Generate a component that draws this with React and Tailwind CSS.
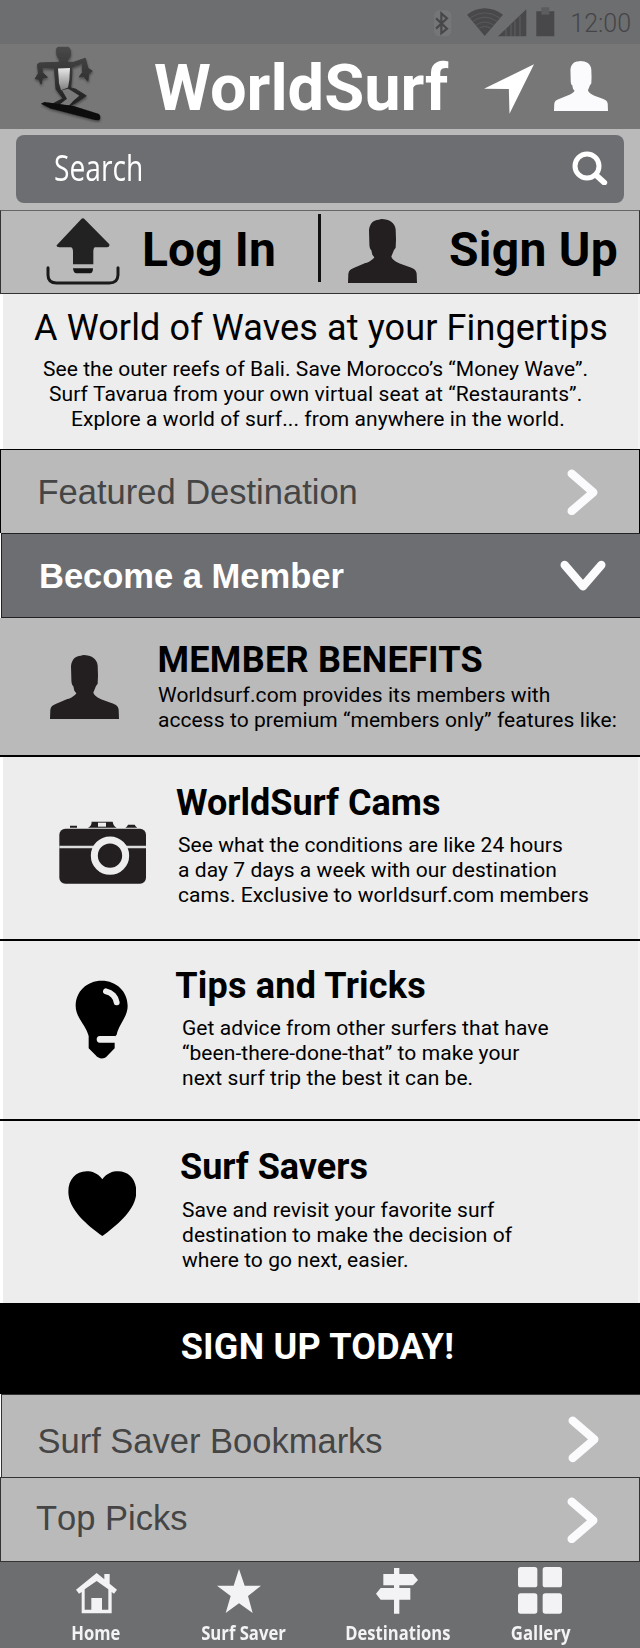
import React from "react";

const roboto = "font-['Roboto',sans-serif]";
const liberation = "font-['Liberation_Sans',sans-serif]";

function Person({ className }) {
  return (
    <svg viewBox="0 0 207 193" preserveAspectRatio="none" fill="currentColor" className={className}>
      <path d="M100 0C124 1 141 10 143 32L144 62L143 87C140 91 137 94 135 101L130 113C132 121 142 129 155 134L184 145C198 150 204 154 206 165L207 193H0L1 165C3 155 8 152 17 148L52 133C66 129 76 120 79 115L73 108L70 94C66 90 64 86 64 70L63 34C65 12 78 2 92 2Z" />
    </svg>
  );
}

function ChevronRight({ className }) {
  return (
    <svg viewBox="0 0 94 140" className={className} fill="none" stroke="#fbfbfd" strokeWidth="25" strokeLinecap="round" strokeLinejoin="round">
      <path d="M14 14L79 70L14 126" />
    </svg>
  );
}

function Surfer() {
  return (
    <svg viewBox="100 135 210 235" className="h-[78px] w-[70px] shrink-0">
      <defs>
        <linearGradient id="body" x1="0" y1="0" x2="0" y2="1">
          <stop offset="0" stopColor="#e8e8e8" />
          <stop offset="1" stopColor="#808080" />
        </linearGradient>
        <linearGradient id="frame" x1="0" y1="0" x2="0" y2="1">
          <stop offset="0" stopColor="#484848" />
          <stop offset="1" stopColor="#202020" />
        </linearGradient>
        <filter id="soft" x="-20%" y="-20%" width="140%" height="150%">
          <feDropShadow dx="1" dy="5" stdDeviation="4" floodColor="#000" floodOpacity="0.4" />
        </filter>
      </defs>
      <g filter="url(#soft)">
        <path d="M174 142H207L213 152L212 168L203 183L204 187L222 187L257 175L265 205L278 213L267 222L265 244L253 230L239 231L249 217L248 205L249 189L216 202L217 218L213 264L228 268L260 288L232 307L210 319L160 312L190 296L169 268L164 205L127 203L128 218L143 232L128 235L124 253L117 238L106 237L116 220L113 193L119 189L178 187L180 181L172 168L170 148Z" fill="url(#frame)" stroke="url(#frame)" strokeWidth="3" strokeLinejoin="round" />
        <path d="M175 206L211 204L209 240L205 263L184 271L178 250Z" fill="url(#body)" />
        <path d="M187 271L205 267L218 274L239 288L222 302L208 317L180 314L202 297Z" fill="#7a7a7a" />
        <path d="M123 312L134 307L222 319L296 342C304 345 304 359 298 362L286 361L152 326Z" fill="#0d0d0d" />
      </g>
    </svg>
  );
}

function StatusIcons() {
  return (
    <svg viewBox="338 20 368 92" className="h-[30.67px] w-[122.67px] shrink-0">
      <rect x="341" y="30" width="52" height="78" rx="16" fill="#757678" />
      <path d="M347 54L380 85L363 99V39L380 54L347 85" fill="none" stroke="#48484a" strokeWidth="6.5" />
      <path d="M440 43Q493 5 548 43L493 107Z" fill="#48484a" />
      <g fill="none" stroke="#6d6e70" strokeOpacity=".55" strokeWidth="2.5">
        <path d="M449 53Q493 22 539 53" />
        <path d="M458 63Q493 38 530 63" />
        <path d="M467 74Q493 56 520 74" />
        <path d="M476 84Q493 73 511 84" />
      </g>
      <path d="M533 108L618 27V108Z" fill="#48484a" />
      <path d="M557 86V108M572 72V108M584 62V108M599 48V108" stroke="#6d6e70" strokeOpacity=".6" strokeWidth="3" />
      <path d="M648 33H665V22H685V33H702V108H648Z" fill="#48484a" />
      <path d="M663 22H687V43H663Z" fill="#5c5d5f" />
    </svg>
  );
}

function Feature({ icon, title, titleClass, lines, linesClass, className }) {
  return (
    <section className={"flex border-black bg-[#ededed] " + className}>
      <div className="w-[3px] shrink-0 bg-white" />
      <div className="flex w-[173px] shrink-0 flex-col">{icon}</div>
      <div className={"grow whitespace-nowrap text-black " + roboto}>
        <h2 className={"text-[36px] leading-[42px] font-bold " + titleClass}>{title}</h2>
        <div className={"text-[21px] leading-[25px] tracking-[0.065px] " + linesClass}>
          {lines.map((l) => (
            <p key={l}>{l}</p>
          ))}
        </div>
      </div>
      <div className="w-[2px] shrink-0 bg-[#f5f5f5]" />
    </section>
  );
}

function NavItem({ icon, label, className, labelClass }) {
  return (
    <a className={"flex flex-col items-center text-[#f3f3f5] " + className}>
      <div className="flex h-[58px] items-start">{icon}</div>
      <span className={"font-['Open_Sans',sans-serif] text-[19.5px] leading-[26px] font-bold whitespace-nowrap " + labelClass}>{label}</span>
    </a>
  );
}

export default function App() {
  return (
    <div className="flex h-[1648px] w-[640px] flex-col overflow-hidden bg-white">
      <div className="flex h-[44px] shrink-0 bg-[#6d6e70] pl-[432.7px] pt-[6.7px]">
        <StatusIcons />
        <span className={"ml-[15px] text-[25px] leading-[34px] font-light text-[#454547] " + roboto}>12:00</span>
      </div>

      <header className="flex h-[85px] shrink-0 bg-[#777777] pl-[33px] pt-[1px]">
        <Surfer />
        <h1 className={"ml-[51px] mt-[3px] w-[330px] text-[65px] leading-[80px] font-bold text-white " + roboto}>WorldSurf</h1>
        <svg viewBox="491 192 151 150" className="mt-[19px] h-[50px] w-[50px] shrink-0">
          <path d="M491 266L642 192L568 342L566 267Z" fill="#fff" />
        </svg>
        <Person className="ml-[20px] mt-[16px] h-[50px] w-[54px] shrink-0 text-[#fbfbfd]" />
      </header>

      <div className="flex h-[81px] shrink-0 items-start bg-[#bababa] pl-[16px] pt-[6px]">
        <div className="flex h-[68px] w-[608px] justify-between rounded-[8px] bg-[#6d6e71] pl-[38px] pr-[15.8px]">
          <span className="mt-[8px] inline-block origin-left scale-x-[0.783] font-['Open_Sans',sans-serif] text-[36px] leading-[50px] text-white">Search</span>
          <svg viewBox="757 452 108 104" className="mt-[15.7px] h-[34.67px] w-[36px]">
            <circle cx="802" cy="497" r="36" fill="none" stroke="#fff" strokeWidth="15" />
            <path d="M830 525L854 547" stroke="#fff" strokeWidth="17" strokeLinecap="round" />
          </svg>
        </div>
      </div>

      <div className={"flex h-[84px] shrink-0 border border-[#333] border-t-[#666] bg-[#bababa] text-black " + roboto}>
        <svg viewBox="138 50 222 210" className="ml-[45px] mt-[5.7px] h-[70px] w-[74px] shrink-0">
          <path d="M249 54Q252 54 257 60L328 132Q330 140 321 141H284Q280 145 280 152V192H219V152Q219 145 214 141H178Q168 140 170 135L242 58Q246 54 249 54Z" fill="#222" />
          <path d="M219 204H279Q279 219 270 219H230Q220 219 219 204Z" fill="#161616" />
          <path d="M144 202V224Q144 248 170 248H328Q353 248 354 224V202" fill="none" stroke="#1a1a1a" strokeWidth="9" strokeLinecap="round" />
        </svg>
        <a className="ml-[22px] w-[176px] pt-[10.6px] text-[48px] leading-[56px] font-bold tracking-[0.1px] whitespace-nowrap">Log In</a>
        <div className="mt-[3px] h-[68px] w-[3px] shrink-0 bg-[#111]" />
        <Person className="ml-[27px] mt-[8px] h-[64px] w-[69px] shrink-0 text-[#231f20]" />
        <a className="ml-[32px] pt-[10.6px] text-[48px] leading-[56px] font-bold tracking-[0.25px] whitespace-nowrap">Sign Up</a>
      </div>

      <section className={"flex h-[155px] shrink-0 flex-col items-start border-r-2 border-l-[3px] border-r-[#f5f5f5] border-l-white bg-[#ededed] whitespace-nowrap text-black " + roboto}>
        <h2 className="pt-[13px] pl-[31px] text-[36px] leading-[42px] tracking-[0.12px]">A World of Waves at your Fingertips</h2>
        <div className="mt-[8.3px] text-[21px] leading-[25px]">
          <p className="pl-[40px] tracking-[0.06px]">See the outer reefs of Bali. Save Morocco’s “Money Wave”.</p>
          <p className="pl-[46px] tracking-[0.1px]">Surf Tavarua from your own virtual seat at “Restaurants”.</p>
          <p className="pl-[68px] tracking-[0.07px]">Explore a world of surf... from anywhere in the world.</p>
        </div>
      </section>

      <div className={"flex h-[84px] shrink-0 justify-between border border-b-0 border-black bg-[#bababa] pl-[36.5px] pr-[41px] text-[#454545] " + liberation}>
        <span className="pt-[22px] text-[34.5px] leading-[40px] whitespace-nowrap">Featured Destination</span>
        <ChevronRight className="mt-[18.5px] h-[46.67px] w-[31.33px]" />
      </div>
      <div className={"ml-px flex h-[85px] shrink-0 justify-between border-y border-l border-[#222] bg-[#6d6e71] pl-[37px] pr-[33.5px] text-white " + liberation}>
        <span className="pt-[22px] text-[34.5px] leading-[40px] font-bold whitespace-nowrap">Become a Member</span>
        <svg viewBox="722 360 139 94" className="mt-[26px] h-[31.33px] w-[46.33px]" fill="none" stroke="#fbfbfd" strokeWidth="25" strokeLinecap="round" strokeLinejoin="round">
          <path d="M736 375L791 439L846 375" />
        </svg>
      </div>

      <section className="flex h-[139px] shrink-0 border-b-2 border-black bg-[#bababa]">
        <Person className="ml-[49.5px] mt-[36.5px] h-[64px] w-[69px] shrink-0 text-[#231f20]" />
        <div className={"ml-[39px] whitespace-nowrap text-black " + roboto}>
          <h2 className="pt-[20.7px] text-[36px] leading-[42px] font-bold tracking-[0.28px]">MEMBER BENEFITS</h2>
          <div className="mt-[2.6px] pl-[0.5px] text-[21px] leading-[25px] tracking-[0.07px]">
            <p>Worldsurf.com provides its members with</p>
            <p>access to premium “members only” features like:</p>
          </div>
        </div>
      </section>

      <Feature
        className="h-[184px] shrink-0 border-b-2"
        icon={
          <svg viewBox="177 214 262 190" className="ml-[56px] mt-[64.3px] h-[63.33px] w-[87.33px]" fill="#231f20">
            <path d="M210 228H231V234H210ZM264 234Q275 229 275 216H338Q340 229 350 234ZM376 234Q382 231 384 225H404Q407 231 412 234Z" />
            <rect x="294" y="219" width="24" height="12" fill="#ededed" />
            <rect x="178" y="237" width="260" height="165" rx="18" />
            <path d="M178 292H438" stroke="#dcdcdc" strokeWidth="7" />
            <circle cx="330" cy="318" r="47" stroke="#ededed" strokeWidth="21" />
          </svg>
        }
        title="WorldSurf Cams"
        titleClass="pt-[25.4px]"
        linesClass="pl-[2px] mt-[9px]"
        lines={[
          "See what the conditions are like 24 hours",
          "a day 7 days a week with our destination",
          "cams. Exclusive to worldsurf.com members",
        ]}
      />
      <Feature
        className="h-[180px] shrink-0 border-b-2"
        icon={
          <svg viewBox="226 690 160 238" className="ml-[72.3px] mt-[39px] h-[79.33px] w-[53.33px]">
            <path d="M306 692C350 692 384 724 384 768C384 800 358 822 351 854L345 860V895L326 914C314 929 299 929 288 916L267 895V858C258 824 228 802 228 768C228 724 262 692 306 692Z" fill="#000" />
            <path d="M319 724C336 727 349 741 351 757" stroke="#ededed" strokeWidth="18" strokeLinecap="round" fill="none" />
            <path d="M346 858H300C288 858 288 878 300 878H346Z" fill="#ededed" />
          </svg>
        }
        title="Tips and Tricks"
        titleClass="pt-[24px] -ml-[0.7px] tracking-[0.2px]"
        linesClass="pl-[6px] mt-[9px]"
        lines={[
          "Get advice from other surfers that have",
          "“been-there-done-that” to make your",
          "next surf trip the best it can be.",
        ]}
      />
      <Feature
        className="h-[182px] shrink-0"
        icon={
          <svg viewBox="203 332 206 196" className="ml-[64.7px] mt-[49.5px] h-[65.33px] w-[68.67px]">
            <path d="M306 357C320 338 337 333 353 333C386 333 408 358 408 394C408 448 350 495 306 527C262 495 204 448 204 394C204 358 226 333 259 333C275 333 292 338 306 357Z" fill="#000" />
          </svg>
        }
        title="Surf Savers"
        titleClass="pt-[25.4px] pl-[4px]"
        linesClass="pl-[6px] mt-[9.3px]"
        lines={[
          "Save and revisit your favorite surf",
          "destination to make the decision of",
          "where to go next, easier.",
        ]}
      />

      <a className={"block h-[91px] shrink-0 bg-black pl-[180.7px] pt-[23.4px] text-[36px] leading-[42px] font-bold tracking-[0.24px] whitespace-nowrap text-white " + roboto}>SIGN UP TODAY!</a>

      <div className={"ml-px flex h-[83px] shrink-0 justify-between border-t border-l border-[#333] bg-[#bababa] pl-[35.5px] pr-[40.5px] text-[#454545] " + liberation}>
        <span className="pt-[26px] text-[34.5px] leading-[40px] whitespace-nowrap">Surf Saver Bookmarks</span>
        <ChevronRight className="mt-[21.2px] h-[46.67px] w-[31.33px]" />
      </div>
      <div className={"flex h-[85px] shrink-0 justify-between border border-[#333] bg-[#bababa] pl-[35px] pr-[40.5px] text-[#454545] " + liberation}>
        <span className="pt-[20px] text-[34.5px] leading-[40px] whitespace-nowrap [font-kerning:none]">Top Picks</span>
        <ChevronRight className="mt-[18.8px] h-[46.67px] w-[31.33px]" />
      </div>

      <nav className="flex h-[86px] shrink-0 bg-[#6d6e70]">
        <NavItem
          className="ml-[36px] w-[120px]"
          label="Home"
          labelClass="scale-x-[0.85]"
          icon={
            <svg viewBox="226 580 123 122" className="mt-[11.3px] h-[40.67px] w-[41px]" fill="currentColor">
              <path d="M226 630L288 580L311 599V583H327V612L349 630L340 642L333 637V701H243V637L235 642ZM252 629V690H272V655H304V690H323V629L288 604Z" fillRule="evenodd" />
            </svg>
          }
        />
        <NavItem
          className="ml-[27.7px] w-[120px]"
          label="Surf Saver"
          labelClass="scale-x-[0.855]"
          icon={
            <svg viewBox="651 566 132 132" className="mt-[6.7px] -ml-[9px] h-[44px] w-[44px]" fill="currentColor">
              <path d="M717 566L734 616H783L744 647L758 698L717 669L677 698L692 647L651 616H701Z" />
            </svg>
          }
        />
        <NavItem
          className="ml-[33.8px] w-[120px]"
          label="Destinations"
          labelClass="scale-x-[0.85]"
          icon={
            <svg viewBox="170 564 126 138" className="mt-[6px] h-[46px] w-[42px]" fill="currentColor">
              <path d="M224 564H240V582H281L296 600L281 616H240V624H273V659H240V701H224V659H184L170 641L184 624H224V616H192V582H224Z" />
            </svg>
          }
        />
        <NavItem
          className="ml-[23px] w-[120px]"
          label="Gallery"
          labelClass="scale-x-[0.86]"
          icon={
            <svg viewBox="597 561 132 140" className="mt-[5px] h-[46.67px] w-[44px]" fill="currentColor">
              <rect x="597" y="561" width="58" height="61" rx="8" />
              <rect x="671" y="561" width="58" height="61" rx="8" />
              <rect x="597" y="640" width="58" height="61" rx="8" />
              <rect x="671" y="640" width="58" height="61" rx="8" />
            </svg>
          }
        />
      </nav>
    </div>
  );
}
